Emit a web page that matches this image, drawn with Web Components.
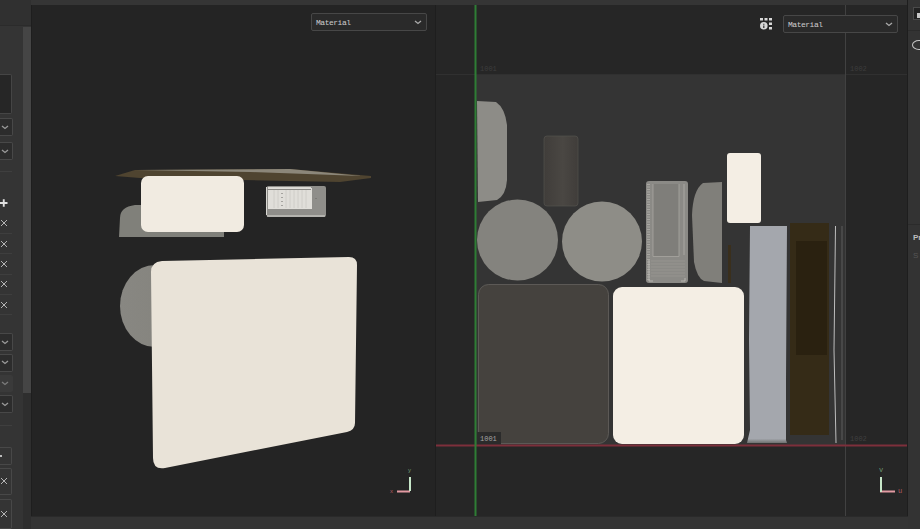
<!DOCTYPE html>
<html>
<head>
<meta charset="utf-8">
<style>
html,body{margin:0;height:100%;background:#2b2b2b;overflow:hidden;}
</style>
</head>
<body>
<app-shell>
  <tool-panel slot="left"></tool-panel>
  <scene-view slot="scene"><mat-select></mat-select></scene-view>
  <uv-view slot="uv"><info-icon></info-icon><mat-select></mat-select></uv-view>
  <side-strip slot="right"></side-strip>
</app-shell>

<script>
function define(name, html){
  customElements.define(name, class extends HTMLElement{
    constructor(){
      super();
      var shadow = this.attachShadow({mode:"open"});
      shadow.innerHTML = html;
    }
  });
}

define("app-shell", `
<style>
:host{display:grid;width:920px;height:529px;grid-template-columns:31px 1px 403px 1px 471px 1px 12px;grid-template-rows:5px 511px 13px;background:#333;}
.top{grid-column:2 / 7;grid-row:1;background:#353535;}
.left{grid-column:1;grid-row:1 / 4;display:flex;}
.sep{background:#1e1e1e;grid-row:2;}
.scene{grid-column:3;grid-row:2;display:flex;}
.uv{grid-column:5;grid-row:2;display:flex;}
.right{grid-column:7;grid-row:1 / 4;display:flex;}
.bottom{grid-column:2 / 7;grid-row:3;background:#343434;border-top:1px solid #2a2a2a;box-sizing:border-box;}
</style>
<div class="top"></div>
<div class="left"><slot name="left"></slot></div>
<div class="sep" style="grid-column:2"></div>
<div class="scene"><slot name="scene"></slot></div>
<div class="sep" style="grid-column:4"></div>
<div class="uv"><slot name="uv"></slot></div>
<div class="sep" style="grid-column:6;grid-row:1 / 4"></div>
<div class="right"><slot name="right"></slot></div>
<div class="bottom"></div>
`);

define("mini-select", `
<style>
:host{display:flex;justify-content:flex-end;align-items:center;box-sizing:border-box;width:13px;height:18px;border:1px solid #484848;border-left:0;border-radius:0 2px 2px 0;background:#2c2c2c;padding-right:3.5px;}
:host([off]){background:#3d3d3d;border-color:#3d3d3d;opacity:.7;}
svg{display:block;}
</style>
<svg width="8" height="5" viewBox="0 0 8 5"><path d="M1 1l3 2.5L7 1" fill="none" stroke="#9a9a9a" stroke-width="1.3"/></svg>
`);

define("close-row", `
<style>
:host{display:flex;align-items:center;box-sizing:border-box;width:12px;height:20.3px;border-bottom:1px solid #3e3e3e;}
svg{display:block;}
</style>
<svg width="8" height="8" viewBox="0 0 8 8"><path d="M1 1l6 6M7 1l-6 6" stroke="#b5b5b5" stroke-width="1"/></svg>
`);

define("tool-panel", `
<style>
:host{display:flex;width:31px;height:529px;background:#343434;}
.col{width:23px;display:flex;flex-direction:column;}
.head{height:26px;background:#303030;border-bottom:1px solid #2b2b2b;width:31px;flex:none;box-sizing:border-box;}
.box{margin-top:48px;width:12px;height:41px;box-sizing:border-box;background:#262626;border:1px solid #454545;border-left:0;border-radius:0 2px 2px 0;}
mini-select{margin-top:4px;}
.rule{width:12px;height:1px;background:#3f3f3f;}
.plus{margin-top:27px;height:12px;width:7.5px;display:flex;justify-content:flex-end;}
.stack{display:flex;flex-direction:column;margin-top:3px;}
.b1{width:12px;height:18px;box-sizing:border-box;border:1px solid #484848;border-left:0;border-radius:0 2px 2px 0;display:flex;align-items:center;}
.b1 i{width:2px;height:2px;background:#bbb;display:block;}
.b2{width:12px;height:27px;box-sizing:border-box;border:1px solid #484848;border-left:0;border-radius:0 2px 2px 0;display:flex;align-items:center;}
.track{width:8px;flex:none;display:flex;flex-direction:column;}
.thumb{margin-top:27px;height:366px;background:#454545;}
.rest{flex:1;background:#2e2e2e;}
</style>
<div class="col">
  <div class="head"></div>
  <div class="box"></div>
  <mini-select></mini-select>
  <mini-select style="margin-top:6px"></mini-select>
  <div class="rule" style="margin-top:11px"></div>
  <div class="plus"><svg width="8" height="8" viewBox="0 0 8 8"><path d="M4 0v8M0 4h8" stroke="#e0e0e0" stroke-width="2"/></svg></div>
  <div class="stack">
    <close-row></close-row><close-row></close-row><close-row></close-row><close-row></close-row><close-row></close-row>
  </div>
  <mini-select style="margin-top:18px"></mini-select>
  <mini-select style="margin-top:3px"></mini-select>
  <mini-select off style="margin-top:3px"></mini-select>
  <mini-select style="margin-top:3px"></mini-select>
  <div class="rule" style="margin-top:12px"></div>
  <div class="b1" style="margin-top:21px"><i></i></div>
  <div class="b2" style="margin-top:3px"><svg width="8" height="8" viewBox="0 0 8 8"><path d="M1 1l6 6M7 1l-6 6" stroke="#b5b5b5" stroke-width="1"/></svg></div>
  <div class="b2" style="margin-top:4px;height:31px"><svg width="8" height="8" viewBox="0 0 8 8"><path d="M1 1l6 6M7 1l-6 6" stroke="#b5b5b5" stroke-width="1"/></svg></div>
</div>
<div class="track" style="margin-left:-23px;padding-left:23px;box-sizing:content-box">
  <div class="thumb"></div><div class="rest"></div>
</div>
`);

define("mat-select", `
<style>
:host{position:absolute;display:flex;align-items:center;justify-content:space-between;box-sizing:border-box;width:116px;height:18px;padding:0 4px;background:#2a2a2a;border:1px solid #474747;border-radius:2px;color:#cccccc;font:8px "Liberation Mono",monospace;letter-spacing:-.48px;}
svg{display:block;}
</style>
<span>Material</span>
<svg width="8" height="5" viewBox="0 0 8 5"><path d="M1 1l3 2.5L7 1" fill="none" stroke="#aaa" stroke-width="1.3"/></svg>
`);

define("info-icon", `
<style>
:host{position:absolute;display:block;width:13px;height:13px;}
svg{display:block;}
</style>
<svg width="13" height="13" viewBox="0 0 13 13">
  <path d="M0 0h3v2.500H0zM4.500 0h3v2.500h-3zM9 0h3v2.500H9zM9 4.500h3v2.500H9zM9 9h3v2.500H9z" fill="#d8d8d8"/>
  <circle cx="3.800" cy="7.800" r="3.800" fill="#d8d8d8"/>
  <path d="M3.800 5.800v1M3.800 7.500v2.500" stroke="#2a2a2a" stroke-width="1.200"/>
</svg>
`);

define("scene-view", `
<style>
:host{position:relative;display:block;width:403px;height:511px;background:#242424;}
svg{position:absolute;left:0;top:0;}
::slotted(mat-select){left:279px;top:8px;}
text{font:6px "Liberation Sans",sans-serif;}
</style>
<svg width="403" height="511" viewBox="32 5 403 511">
  <defs>
    <filter id="soft" color-interpolation-filters="sRGB"><feGaussianBlur stdDeviation=".5"/></filter>
    <linearGradient id="half" x1="0" x2="1"><stop offset="0" stop-color="#888782"/><stop offset=".7" stop-color="#85847e"/><stop offset="1" stop-color="#72716c"/></linearGradient>
  </defs>
  <g filter="url(#soft)">
    <path d="M115 176L135 170L290 169L371 176L371 178L340 182L240 180L140 178Z" fill="#4f4430"/>
    <path d="M135 170L290 169L362 176L250 172Z" fill="#8c877a"/>
    <path d="M135 205Q120 207 120 218L119 237L224 237L224 232L150 232L142 225L141 205Z" fill="#80807a"/>
    <rect x="141" y="176" width="103" height="56" rx="7" fill="#f1ebe1"/>
    <rect x="266.500" y="186" width="59.500" height="31" rx="2" fill="#8f8e8a"/>
    <rect x="268" y="188" width="44" height="21" fill="#e0ded9"/>
    <path d="M268 187.500H311M266.500 187V215M267 216H325" stroke="#d9d8d3"/>
    <path d="M268 189.500H311" stroke="#8a8985"/>
    <path d="M274 190V208M278 190V208M286 190V208M290 190V208M294 190V208M298 190V208M302 190V208M306 190V208" stroke="#cbc9c4" stroke-width=".8"/>
    <path d="M282 193V208M316 198v1" stroke="#6a6965" stroke-dasharray="1 3"/>
    <ellipse cx="155" cy="306" rx="35" ry="41" fill="url(#half)"/>
    <path d="M162 261L349 257Q357 257 357 265L355 423Q355 430 347 432L165 468Q153 470 153 458L151 272Q151 262 162 261Z" fill="#e9e3d8"/>
  </g>
  <path d="M397 491.500H410" stroke="#e39aa2" stroke-width="2"/>
  <path d="M410 491V477" stroke="#c6e6c8" stroke-width="2"/>
  <text x="390" y="493" fill="#b05a60">x</text>
  <text x="408" y="472" fill="#6f9a72">y</text>
</svg>
<slot></slot>
`);

define("uv-view", `
<style>
:host{position:relative;display:block;width:471px;height:511px;background:#262626;}
svg{position:absolute;left:0;top:0;}
::slotted(mat-select){left:347px;top:10px;width:115px;}
::slotted(info-icon){left:324px;top:13px;}
text{font:7px "Liberation Mono",monospace;}
</style>
<svg width="471" height="511" viewBox="436 5 471 511">
  <defs>
    <filter id="soft2" color-interpolation-filters="sRGB"><feGaussianBlur stdDeviation=".4"/></filter>
    <linearGradient id="bar" x1="0" x2="0" y1="0" y2="1"><stop offset="0" stop-color="#a4a7ad"/><stop offset=".98" stop-color="#a4a7ad"/><stop offset="1" stop-color="#6f7170"/></linearGradient>
    <linearGradient id="card" x1="0" x2="1"><stop offset="0" stop-color="#403d3a"/><stop offset=".55" stop-color="#4a4743"/><stop offset="1" stop-color="#403d3a"/></linearGradient>
  </defs>
  <rect x="476" y="75" width="369" height="370" fill="#343434"/>
  <path d="M436 74.500H907" stroke="#303030"/>
  <path d="M845.500 5V516" stroke="#414141"/>
  <g filter="url(#soft2)">
    <path d="M477 101L496 102Q505 108 507 125L507 180Q506 195 497 200L478 202Z" fill="#8d8c87"/>
    <rect x="544" y="136" width="34" height="70" rx="3" fill="url(#card)" stroke="#55534f" stroke-width=".7"/>
    <circle cx="517.500" cy="240" r="40.500" fill="#84837e"/>
    <circle cx="602" cy="241.500" r="40" fill="#8e8d87"/>
    <rect x="646" y="181" width="42" height="102" rx="3" fill="#8b8a86"/>
    <path d="M648.500 184V280" stroke="#a9a7a2" stroke-dasharray="1 1.500" stroke-width="3"/>
    <path d="M684 184V255" stroke="#a9a7a2" stroke-width="1"/>
    <path d="M653 184V256.500H679V184" fill="#7f7e7a" stroke="#a8a6a1" stroke-width=".8"/>
    <path d="M651 261H685M651 264H685M651 267H685M651 270H685M651 273H685M651 276H685" stroke="#9a9893" stroke-width=".8"/>
    <path d="M649 260V281H653M685 278V281H681" stroke="#c0beb9" fill="none" stroke-width=".8"/>
    <path d="M703 183L722 182L722 283L704 281Q697 278 694 262L692 215Q693 190 703 183Z" fill="#807f7a"/>
    <rect x="727" y="153" width="34" height="70" rx="3" fill="#f4eee4"/>
    <rect x="728" y="245" width="3" height="38" fill="#3a2f1c"/>
    <rect x="478.500" y="284.500" width="130" height="159" rx="10" fill="#45423e" stroke="#64625e" stroke-width=".8"/>
    <rect x="613" y="287" width="131" height="157" rx="9" fill="#f4eee4"/>
    <path d="M750 226H787L786 380L786 440L787 443H747L750 430L749 340Z" fill="url(#bar)"/>
    <rect x="790" y="223" width="39" height="212" fill="#352b17"/>
    <rect x="796" y="241" width="31" height="114" fill="#2a2110"/>
    <path d="M835.500 226L834 350L836 443" stroke="#bdbdbd" fill="none"/>
    <path d="M842 226V440" stroke="#5d5d5d" fill="none"/>
  </g>
  <rect x="477" y="432" width="24" height="13" fill="#2b2b2b"/>
  <path d="M436 445.500H907" stroke="#7d2f3b" stroke-width="2"/>
  <path d="M475.500 5V516" stroke="#2e7d35" stroke-width="2"/>
  <text x="480" y="441" fill="#a5a5a5">1001</text>
  <text x="480" y="71" fill="#3d3d3d">1001</text>
  <text x="850" y="71" fill="#3d3d3d">1002</text>
  <text x="850" y="441" fill="#404040">1002</text>
  <path d="M880 491.500H895" stroke="#e39aa2" stroke-width="2"/>
  <path d="M881 492V477" stroke="#c6e6c8" stroke-width="2"/>
  <text x="879" y="472" fill="#6f9a72">v</text>
  <text x="898" y="493" fill="#b05a60">u</text>
</svg>
<slot></slot>
`);

define("side-strip", `
<style>
:host{display:flex;flex-direction:column;width:12px;height:529px;background:#333;overflow:hidden;font:bold 8px "Liberation Sans",sans-serif;color:#bdbdbd;}
.head{flex:none;margin-top:7px;height:13px;margin-left:5px;background:#222;border:1px solid #4a4a4a;border-right:0;box-sizing:border-box;display:flex;align-items:flex-end;justify-content:flex-end;}
.head i{display:block;width:3px;height:5px;background:#c8c8c8;margin-bottom:1px;}
.rule{margin-top:10px;height:1px;background:#2b2b2b;flex:none;}
.eye{margin:9px 0 0 4px;width:14px;height:10px;border:1.500px solid #c8c8c8;border-radius:50%;box-sizing:border-box;flex:none;}
.dark{height:1px;background:#2b2b2b;margin-top:174px;flex:none;}
.title{margin:7px 0 0 5px;white-space:nowrap;line-height:12px;}
.sub{margin:7px 0 0 5px;color:#555;font-weight:normal;line-height:10px;}
</style>
<div class="head"><i></i></div>
<div class="rule"></div>
<div class="eye"></div>
<div class="dark"></div>
<div class="title">Pr</div>
<div class="sub">S</div>
`);
</script>
</body>
</html>
